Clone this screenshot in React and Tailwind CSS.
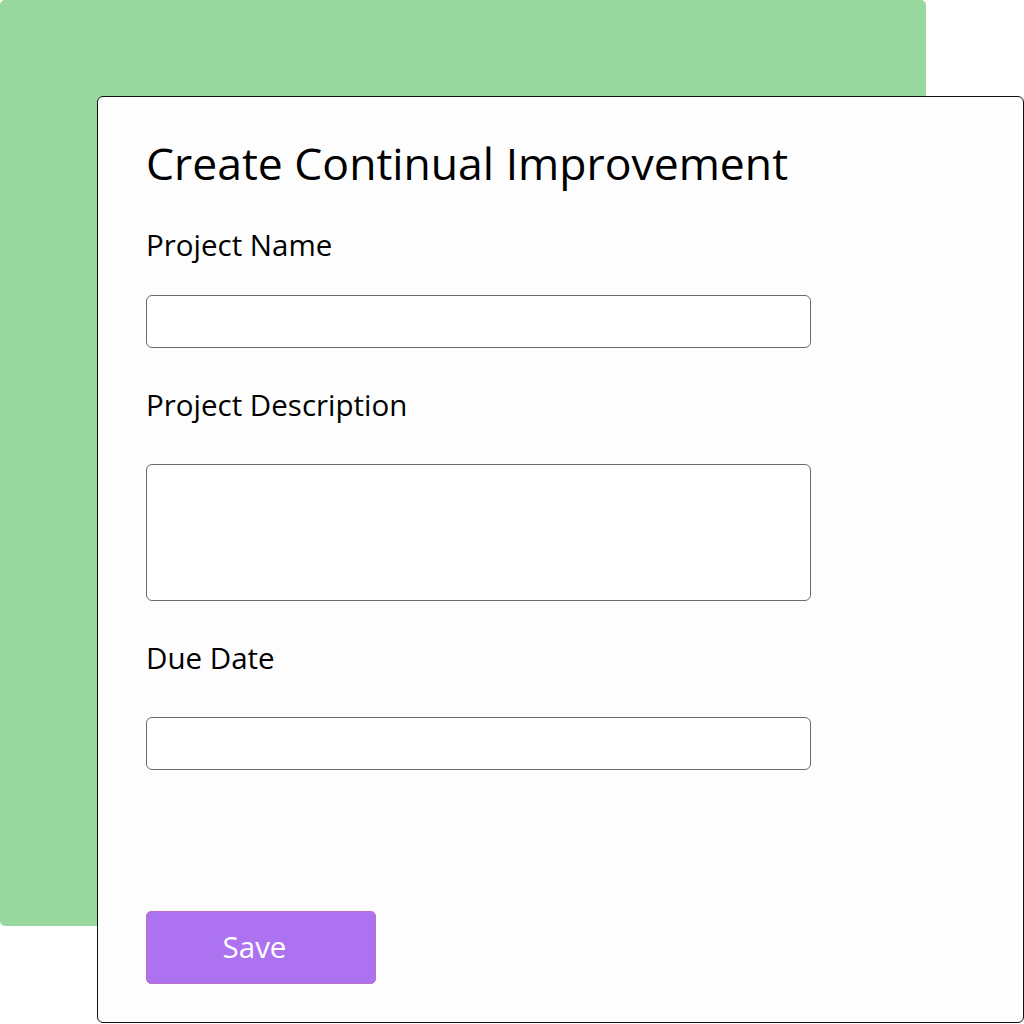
export default function App() {
  return (
    <div className="relative w-[1024px] h-[1024px] bg-white overflow-hidden" style={{ fontFamily: '"Open Sans", "Noto Sans", sans-serif' }}>
      {/* green backdrop */}
      <div className="w-[926px] h-[926px] rounded-[5px] bg-[#98d89e]" />

      {/* form card */}
      <div className="absolute left-[97px] top-[96px] w-[927px] h-[927px] rounded-[6px] border border-[#111] bg-[#fdfdfd] pl-[48px] pt-[38px]">
        <h1 className="text-[44.5px] leading-[56px] text-black">Create Continual Improvement</h1>

        <label className="block mt-[34px] text-[29.5px] leading-[40px] text-black">Project Name</label>
        <input className="block mt-[30px] w-[665px] h-[53px] rounded-[6px] border border-[#6b6b6b] bg-white" />

        <label className="block mt-[37px] text-[29.5px] leading-[40px] text-black">Project Description</label>
        <textarea className="block mt-[39px] w-[665px] h-[137px] rounded-[6px] border border-[#6b6b6b] bg-white resize-none" />

        <label className="block mt-[37px] text-[29.5px] leading-[40px] text-black">Due Date</label>
        <input className="block mt-[39px] w-[665px] h-[53px] rounded-[6px] border border-[#6b6b6b] bg-white" />

        <button className="block mt-[141px] w-[230px] h-[73px] pr-[13px] rounded-[5px] border border-[#b86fc4] bg-[#ad72ef] text-white text-[29.5px]">
          Save
        </button>
      </div>
    </div>
  );
}
